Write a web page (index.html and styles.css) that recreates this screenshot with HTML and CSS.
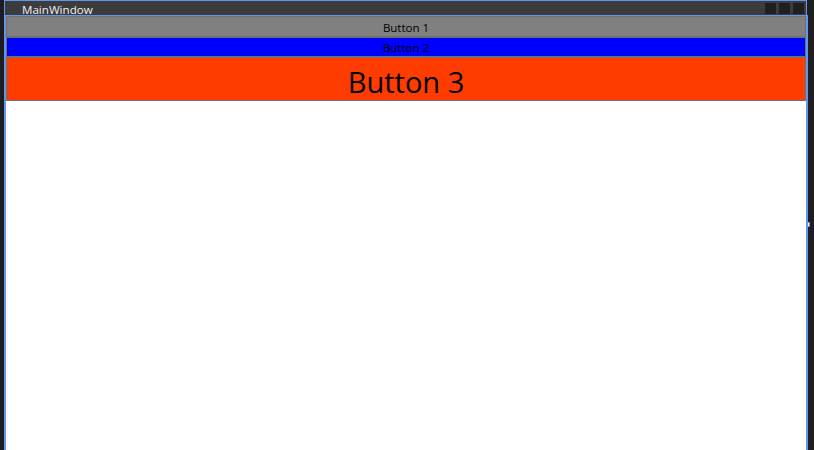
FILE: index.html
```html
<!DOCTYPE html>
<html>
<head>
<meta charset="utf-8">
<link rel="stylesheet" href="styles.css">
</head>
<body>
<div class="desktop">
  <div class="window">
    <div class="titlebar">
      <span class="title">MainWindow</span>
      <div class="caption-buttons">
        <span class="cap"></span>
        <span class="cap"></span>
        <span class="cap"></span>
      </div>
    </div>
    <div class="client">
      <div class="btn btn-gray">Button 1</div>
      <div class="btn btn-blue">Button 2</div>
      <div class="btn btn-red">Button 3</div>
    </div>
  </div>
  <div class="grip"></div>
</div>
</body>
</html>
```

FILE: styles.css
```css
html, body {
  margin: 0;
  padding: 0;
  background: #1c1e22;
  width: 814px;
  height: 450px;
  overflow: hidden;
}

.desktop {
  position: relative;
  width: 814px;
  height: 450px;
}

.window {
  display: flex;
  flex-direction: column;
  padding-left: 4px;
  width: 804px;
  height: 450px;
}

.titlebar {
  display: flex;
  align-items: center;
  justify-content: space-between;
  height: 14px;
  width: 801px;
  background: #3c3c3c;
  border: 1px solid #6495ed;
  border-bottom: none;
  font-family: "Open Sans", "Noto Sans", sans-serif;
  font-size: 11.6px;
  color: #f2f2f2;
}

.title {
  padding-left: 17px;
  line-height: 14px;
  margin-top: 3px;
}

.caption-buttons {
  display: flex;
  gap: 3px;
  padding-right: 2px;
  margin-top: 1px;
}

.cap {
  display: block;
  width: 11px;
  height: 11px;
  background: #1f1f1f;
}

.client {
  flex: 1;
  display: flex;
  flex-direction: column;
  width: 800px;
  background: #ffffff;
  border: 2px solid #6495ed;
  border-top: 1px solid #6495ed;
  border-bottom: none;
  font-family: "Open Sans", "Noto Sans", sans-serif;
  color: #000000;
}

.btn {
  display: flex;
  align-items: center;
  justify-content: center;
  border: 1px solid #707070;
  box-sizing: border-box;
}

.btn-gray {
  background: #808080;
  height: 21px;
  font-size: 11.5px;
  padding-top: 1px;
}

.btn-blue {
  background: #0000ff;
  height: 20px;
  font-size: 11.5px;
}

.btn-red {
  background: #ff3c00;
  height: 44px;
  font-size: 29px;
  padding-top: 5px;
}

.grip {
  position: absolute;
  left: 807px;
  top: 222px;
  width: 1px;
  height: 3px;
  background: #ffffff;
  border: 1px solid #6495ed;
}
```
